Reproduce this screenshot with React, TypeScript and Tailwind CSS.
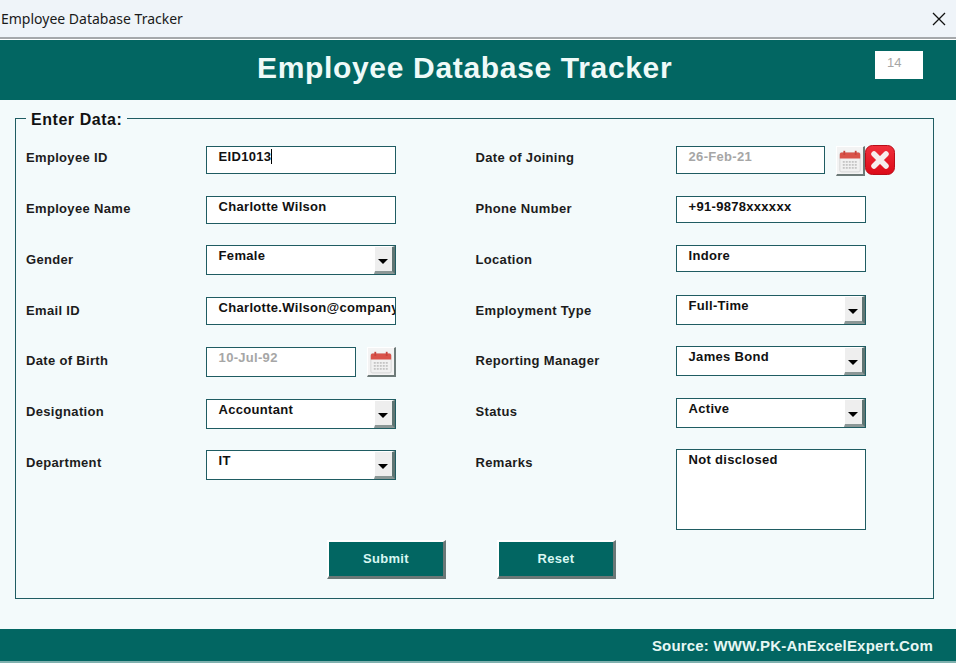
import React from 'react';

const sans = "font-['Liberation_Sans',Arial,sans-serif]";

function CalendarIcon() {
  return (
    <svg width="24" height="24" viewBox="0 0 20 20">
      <rect x="1.5" y="3" width="17" height="16" rx="1.5" fill="#f1f1f1" stroke="#dcdcdc" />
      <path d="M1.5 8V4.5A1.5 1.5 0 0 1 3 3h14a1.5 1.5 0 0 1 1.500 1.500V8z" fill="#d9534a" />
      <rect x="4.500" y="1.500" width="1.500" height="3.500" fill="#c9443c" />
      <rect x="14" y="1.500" width="1.500" height="3.500" fill="#c9443c" />
      <g fill="#c4c4c4">
        {[10, 12.500, 15].map((y) =>
          [4, 6.500, 9, 11.500, 14].map((x) => <rect key={`${x}-${y}`} x={x} y={y} width="1.600" height="1.500" />)
        )}
      </g>
    </svg>
  );
}

function CalendarButton() {
  return (
    <div className="w-[29px] h-[30px] shrink-0 flex items-center justify-center bg-[#f3f3f3] border-t border-l border-t-white border-l-white border-r-2 border-b-2 border-r-[#6d7a78] border-b-[#6d7a78]">
      <CalendarIcon />
    </div>
  );
}

function CloseIcon() {
  return (
    <svg width="30" height="30" viewBox="0 0 30 30">
      <defs>
        <linearGradient id="redGrad" x1="0" y1="0" x2="0" y2="1">
          <stop offset="0" stopColor="#f0303c" />
          <stop offset="1" stopColor="#dc0a18" />
        </linearGradient>
      </defs>
      <rect x="0.500" y="0.500" width="29" height="29" rx="7" fill="url(#redGrad)" stroke="#b80d18" />
      <path d="M9 9l12 12M21 9L9 21" stroke="#f6eeee" strokeWidth="5.500" strokeLinecap="round" />
    </svg>
  );
}

function DropButton() {
  return (
    <div className="absolute right-0 top-0 bottom-0 w-[21px] flex items-center justify-center bg-[#eeeeee] border-t border-l border-t-white border-l-white border-r-[3px] border-b-[3px] border-r-[#5f7573] border-b-[#8b9796]">
      <div className="w-0 h-0 border-l-[5px] border-r-[5px] border-t-[5px] border-l-transparent border-r-transparent border-t-black mt-1" />
    </div>
  );
}

interface FieldProps {
  value: string;
  width?: string;
  height: string;
  spacing: string;
  dropdown?: boolean;
  muted?: boolean;
  caret?: boolean;
}

function Field({ value, width = 'w-[190px]', height, spacing, dropdown, muted, caret }: FieldProps) {
  return (
    <div
      className={`relative overflow-hidden shrink-0 bg-white border border-[#1f5c62] pl-[12px] pt-[2px] text-[13px] leading-[16px] font-bold tracking-[0.3px] whitespace-nowrap ${width} ${height} ${spacing} ${
        muted ? 'text-[#a6a6a6]' : 'text-[#111111]'
      }`}
    >
      {value}
      {caret && <span className="inline-block w-px h-[15px] bg-black align-top" />}
      {dropdown && <DropButton />}
    </div>
  );
}

function Label({ text }: { text: string }) {
  return <div className="h-[50.850px] text-[13px] leading-[20px] font-bold tracking-[0.33px] text-[#1c1c1c]">{text}</div>;
}

function ActionButton({ text }: { text: string }) {
  return (
    <button className="w-[119px] h-[39px] bg-[#026662] text-[#d9f7f2] text-[13px] font-bold tracking-[0.3px] border-t-2 border-l-2 border-t-white border-l-white border-r-[3px] border-b-[3px] border-r-[#6b7877] border-b-[#6b7877]">
      {text}
    </button>
  );
}

export default function App() {
  return (
    <div className={`w-[956px] h-[663px] overflow-hidden flex flex-col bg-[#f3fafb] ${sans}`}>
      <div className="h-[37px] bg-[#eff4f9] flex items-center justify-between pl-[1px] pr-[10px] font-['Noto_Sans',sans-serif] text-[14px] text-[#1a1a1a]">
        <span>Employee Database Tracker</span>
        <svg width="14" height="14" viewBox="0 0 14 14">
          <path d="M1 1l12 12M13 1L1 13" stroke="#111" strokeWidth="1.300" />
        </svg>
      </div>
      <div className="h-[2px] bg-[#a5a8ab]" />
      <div className="h-px bg-white" />

      <div className="relative h-[60px] shrink-0 bg-[#026662] flex items-center pl-[257px] pb-[4px]">
        <h1 className="text-[30px] leading-none font-bold tracking-[0.67px] text-[#effaf8]">Employee Database Tracker</h1>
        <div className="absolute left-[875px] top-[11px] w-[48px] h-[28px] bg-white pl-[12px] pt-[4px] text-[13px] leading-[16px] text-[#a6a6a6]">14</div>
      </div>

      <div className="relative mt-[18px] ml-[15px] w-[919px] h-[481px] border border-[#1f5c62] pt-[27px] pl-[10px]">
        <div className="absolute left-[10px] -top-[8px] px-[5px] bg-[#f3fafb] text-[16px] leading-[18px] font-bold tracking-[0.55px] text-[#111111]">
          Enter Data:
        </div>

        <div className="flex">
          <div className="w-[180px] pt-[2px]">
            {['Employee ID', 'Employee Name', 'Gender', 'Email ID', 'Date of Birth', 'Designation', 'Department'].map((t) => (
              <Label key={t} text={t} />
            ))}
          </div>
          <div className="w-[270px]">
            <Field value="EID1013" caret height="h-[28px]" spacing="mb-[22px]" />
            <Field value="Charlotte Wilson" height="h-[28px]" spacing="mb-[21px]" />
            <Field value="Female" dropdown height="h-[30px]" spacing="mb-[22px]" />
            <Field value="Charlotte.Wilson@company.com" height="h-[28px]" spacing="mb-[22px]" />
            <div className="flex items-start gap-[11px] mb-[22px]">
              <Field value="10-Jul-92" muted width="w-[150px]" height="h-[30px]" spacing="" />
              <CalendarButton />
            </div>
            <Field value="Accountant" dropdown height="h-[30px]" spacing="mb-[21px]" />
            <Field value="IT" dropdown height="h-[30px]" spacing="" />
          </div>
          <div className="w-[200px] pt-[2px] pl-[0.500px]">
            {['Date of Joining', 'Phone Number', 'Location', 'Employment Type', 'Reporting Manager', 'Status', 'Remarks'].map((t) => (
              <Label key={t} text={t} />
            ))}
          </div>
          <div className="w-[258px] ml-[1px]">
            <div className="flex items-start mb-[20px]">
              <Field value="26-Feb-21" muted width="w-[149px]" height="h-[28px]" spacing="mr-[11px]" />
              <CalendarButton />
              <div className="-mt-[1px]">
                <CloseIcon />
              </div>
            </div>
            <Field value="+91-9878xxxxxx" height="h-[27px]" spacing="mb-[22px]" />
            <Field value="Indore" height="h-[27px]" spacing="mb-[23px]" />
            <Field value="Full-Time" dropdown height="h-[30px]" spacing="mb-[21px]" />
            <Field value="James Bond" dropdown height="h-[30px]" spacing="mb-[22px]" />
            <Field value="Active" dropdown height="h-[30px]" spacing="mb-[21px]" />
            <Field value="Not disclosed" height="h-[81px]" spacing="" />
          </div>
        </div>

        <div className="absolute left-[311px] top-[421px] flex gap-[51px]">
          <ActionButton text="Submit" />
          <ActionButton text="Reset" />
        </div>
      </div>

      <div className="mt-[30px] h-[32px] shrink-0 bg-[#026662] flex items-center justify-end pr-[23px] pt-[3px] text-[15px] font-bold tracking-[0.19px] text-[#e6f7f4]">
        Source: WWW.PK-AnExcelExpert.Com
      </div>
      <div className="h-[2px] bg-[#7fb0ae]" />
    </div>
  );
}
